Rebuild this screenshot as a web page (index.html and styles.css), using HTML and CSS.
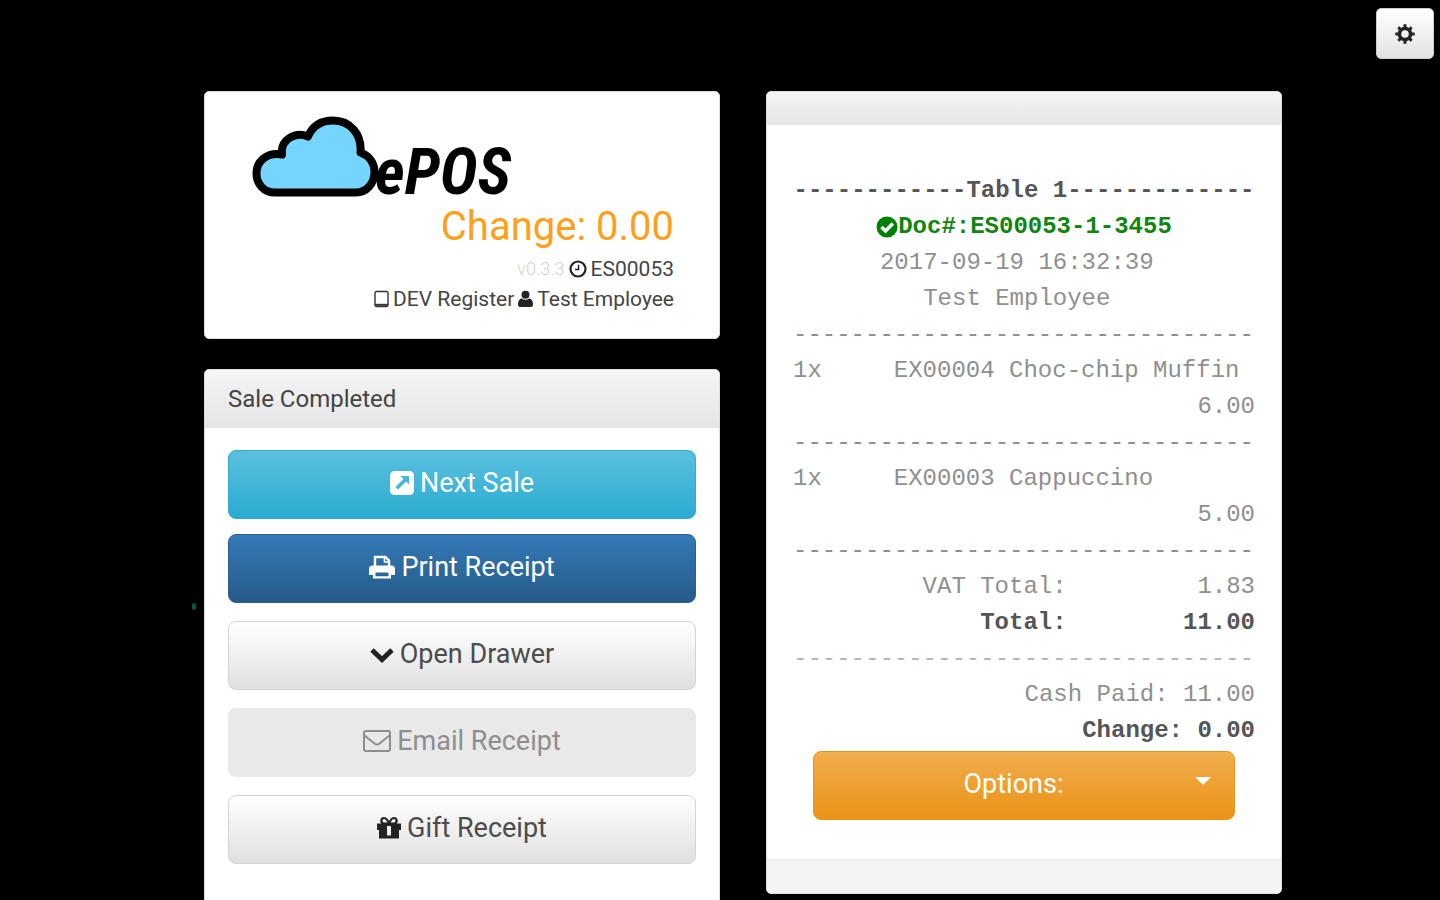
FILE: index.html
```html
<!DOCTYPE html>
<html lang="en">
<head>
<meta charset="utf-8">
<title>ePOS - Sale Completed</title>
<link rel="stylesheet" href="styles.css">
</head>
<body>
<button class="settings" type="button" aria-label="Settings">
  <svg class="icon-cog" viewBox="0 0 20 20" aria-hidden="true"><circle cx="10" cy="10" r="5.3" fill="none" stroke="#222" stroke-width="4"/><path d="M10 .3v19.4M.3 10h19.4M3.3 3.3l13.4 13.4M16.7 3.3L3.300 16.700" stroke="#222" stroke-width="3"/><circle cx="10" cy="10" r="3.8" fill="#f2f2f2"/></svg>
</button>
<main class="page">
  <div class="column">
    <section class="panel summary">
      <svg class="logo" viewBox="0 0 262 84" role="img" aria-label="ePOS">
        <path d="M23 76.500C12 76.500 4.500 68 4.500 57.500C4.500 45 15 36 30 38.500C28 24 43 15 56 20.500C61 9 70 4.500 81 4.500C98 4.500 110 18 108.500 36.500C118 40 122.500 48 122.500 56C122.500 68 114 76.500 104 76.500Z" transform="translate(2 0)" fill="#76d5fe" stroke="#000" stroke-width="8" stroke-linejoin="round"/>
        <text class="logo-text" x="125" y="78">ePOS</text>
      </svg>
      <h1 class="change">Change: 0.00</h1>
      <p class="meta"><span class="version">v0.3.3</span>
        <svg class="icon-sm" viewBox="0 0 18 18" aria-hidden="true"><circle cx="9" cy="9" r="7.500" fill="none" stroke="#222" stroke-width="2.200"/><path d="M9.500 4.800v4.700H6" fill="none" stroke="#222" stroke-width="1.500"/></svg>
        <span>ES00053</span></p>
      <p class="meta"><svg class="icon-tablet" viewBox="0 0 15 18" aria-hidden="true"><rect x="1" y="1.500" width="13" height="15" rx="1.500" fill="none" stroke="#333" stroke-width="1.400"/><path d="M1 14.800h13" stroke="#333" stroke-width="2"/></svg>
        <span>DEV Register</span>
        <svg class="icon-user" viewBox="0 0 15 18" aria-hidden="true"><circle cx="7.500" cy="4.800" r="4" fill="#222"/><path d="M3.500 8.200Q7.500 11.300 11.500 8.200Q15 9.500 15 14.500Q15 17 12.500 17H2.500Q0 17 0 14.500Q0 9.500 3.500 8.200Z" fill="#222"/></svg>
        <span>Test Employee</span></p>
    </section>
    <section class="panel sale">
      <h2 class="panel-head">Sale Completed</h2>
      <div class="actions">
        <div class="main-actions">
          <button class="btn info" type="button"><svg class="icon" viewBox="0 0 24 24" aria-hidden="true"><path fill-rule="evenodd" fill="#fff" d="M4.500 0h15A4.500 4.500 0 0 1 24 4.500v15a4.500 4.500 0 0 1-4.500 4.500h-15A4.500 4.500 0 0 1 0 19.500v-15A4.500 4.500 0 0 1 4.500 0ZM10.500 5L13.500 8L5.500 16L8 18.500L16 10.500L19 13.500V5Z"/></svg>Next Sale</button>
          <button class="btn primary" type="button"><svg class="icon wide" viewBox="0 0 26 24" aria-hidden="true"><path d="M6 12V2h10.500L20 5.500V12" fill="none" stroke="#fff" stroke-width="2.400"/><path d="M15.500 2v5H20" fill="none" stroke="#fff" stroke-width="1.600"/><path fill="#fff" fill-rule="evenodd" d="M3.500 10.500h19Q26 10.500 26 14v6h-4v3.500H4V20H0v-6Q0 10.500 3.500 10.500ZM6.500 17.500v3.700h13v-3.700Z"/></svg>Print Receipt</button>
        </div>
        <button class="btn plain" type="button"><svg class="icon" viewBox="0 0 24 24" aria-hidden="true"><path d="M2 8l10 9.500L22 8" fill="none" stroke="#222" stroke-width="5"/></svg>Open Drawer</button>
        <button class="btn plain" type="button" disabled><svg class="icon mail" viewBox="0 0 28 24" aria-hidden="true"><rect x="1" y="2" width="26" height="20" rx="2" fill="none" stroke="#8e8e8e" stroke-width="2"/><path d="M1.500 6.500L11.500 14.500Q14 16.500 16.500 14.500L26.500 6.500" fill="none" stroke="#8e8e8e" stroke-width="2"/></svg>Email Receipt</button>
        <button class="btn plain" type="button"><svg class="icon" viewBox="0 0 24 24" aria-hidden="true"><path d="M12 7.500C10 2.500 8.500 2 7 2C3.500 2 3.500 7.500 7 7.500ZM12 7.500C14 2.500 15.500 2 17 2C20.500 2 20.500 7.500 17 7.500Z" fill="none" stroke="#222" stroke-width="2.200"/><path fill="#222" fill-rule="evenodd" d="M0 7.500h24v6.500h-2v8.500H2V14H0ZM10 10v9.500h4V10Z"/></svg>Gift Receipt</button>
      </div>
    </section>
  </div>
  <section class="panel receipt">
    <div class="receipt-head"></div>
    <div class="receipt-body">
      <p class="line strong">------------Table 1-------------</p>
      <p class="line doc"><svg class="icon-check" viewBox="0 0 22 22" aria-hidden="true"><circle cx="11" cy="11" r="10.500" fill="#008000"/><path d="M5.500 11l4 4 7.300-7.500" fill="none" stroke="#fff" stroke-width="3.400"/></svg>Doc#:ES00053-1-3455</p>
      <p class="line">2017-09-19 16:32:39&nbsp;</p>
      <p class="line">Test Employee&nbsp;</p>
      <table class="items">
        <colgroup><col class="col-qty"><col class="col-label"><col></colgroup>
        <tbody>
          <tr><td colspan="3">--------------------------------</td></tr>
          <tr><td>1x</td><td colspan="2">EX00004 Choc-chip Muffin</td></tr>
          <tr><td colspan="3" class="num">6.00</td></tr>
          <tr><td colspan="3">--------------------------------</td></tr>
          <tr><td>1x</td><td colspan="2">EX00003 Cappuccino</td></tr>
          <tr><td colspan="3" class="num">5.00</td></tr>
          <tr><td colspan="3">--------------------------------</td></tr>
          <tr><td colspan="2" class="num">VAT Total:</td><td class="num">1.83</td></tr>
          <tr class="strong"><td colspan="2" class="num">Total:</td><td class="num">11.00</td></tr>
          <tr class="faint"><td colspan="3">--------------------------------</td></tr>
          <tr><td colspan="3" class="num">Cash Paid: 11.00</td></tr>
          <tr class="strong"><td colspan="3" class="num">Change: 0.00</td></tr>
        </tbody>
      </table>
      <button class="btn warning" type="button"><span class="options-label">Options:</span><span class="caret"></span></button>
    </div>
    <div class="receipt-foot"></div>
  </section>
</main>
<span class="mark"></span>
</body>
</html>
```
FILE: styles.css
```css
* { box-sizing: border-box; }
body {
  margin: 0;
  background: #000;
  color: #444;
  font-family: Roboto, "Liberation Sans", sans-serif;
}
h1, h2, p { margin: 0; font-weight: 400; }
button { font: inherit; cursor: pointer; }
.page {
  display: grid;
  grid-template-columns: minmax(0, 1fr) minmax(0, 1fr);
  align-items: start;
  gap: 46px;
  height: 100vh;
  padding: 91px 158px 0 204px;
  overflow: auto;
  scrollbar-width: none;
}
.column { display: flex; flex-direction: column; gap: 30px; }
.panel {
  background: #fff;
  border: 1px solid #ddd;
  border-radius: 5px;
  overflow: hidden;
}
.settings {
  position: absolute;
  top: 8px;
  right: 6px;
  display: grid;
  place-items: center;
  width: 58px;
  height: 51px;
  padding: 0;
  border: 1px solid #ccc;
  border-radius: 5px;
  background: linear-gradient(#fff, #e2e2e2);
}
.icon-cog { width: 20px; height: 20px; }
.summary { padding: 24px 45px; text-align: right; }
.logo { display: block; width: 262px; height: 84px; overflow: visible; }
.logo-text {
  font: italic 700 64px "Liberation Sans Narrow", "Roboto Condensed", "Open Sans", sans-serif;
  fill: #000;
}
.change { color: #ff9f1a; font-size: 40px; line-height: 54px; }
.meta {
  display: flex;
  justify-content: flex-end;
  align-items: center;
  gap: 4px;
  font-size: 21px;
  line-height: 30px;
}
.version { color: #d0d0d0; font-weight: 300; font-size: 18px; }
.icon-sm { width: 18px; height: 18px; }
.icon-tablet, .icon-user { width: 15px; height: 18px; }
.sale { min-height: 560px; }
.panel-head {
  height: 58px;
  padding: 0 23px;
  background: linear-gradient(#f5f5f5, #e5e5e5);
  font-size: 24px;
  line-height: 58px;
}
.actions { display: flex; flex-direction: column; gap: 18px; padding: 22px 23px; }
.main-actions { display: flex; flex-direction: column; gap: 15px; }
.btn {
  display: flex;
  justify-content: center;
  align-items: center;
  gap: 6px;
  width: 100%;
  height: 69px;
  padding: 0 0 4px;
  border: 1px solid;
  border-radius: 8px;
  font-size: 27px;
}
.icon { width: 24px; height: 24px; }
.wide { width: 26px; }
.mail { width: 28px; }
.info { color: #fff; border-color: #35abd0; background: linear-gradient(#5bc0de, #2aabd2); }
.primary { color: #fff; border-color: #2a6298; background: linear-gradient(#337ab7, #265a88); }
.plain { color: #4c4c4c; border-color: #d4d4d4; background: linear-gradient(#fff, #e0e0e0); }
.plain:disabled { color: #8e8e8e; border-color: #e8e8e8; background: #e9e9e9; }
.warning {
  width: auto;
  margin: 2px 20px 0;
  align-self: stretch;
  color: #fff;
  border-color: #e8951e;
  background: linear-gradient(#f0ad4e, #eb9316);
}
.options-label { flex: 1; padding-left: 24px; }
.caret {
  margin: 0 23px 6px 0;
  border: 8px solid transparent;
  border-top-color: #fff;
  border-bottom: 0;
}
.receipt-head { height: 33px; background: linear-gradient(#f5f5f5, #e5e5e5); }
.receipt-body {
  display: flex;
  flex-direction: column;
  padding: 48px 26px 39px;
  color: #8f8f8f;
  font: 24px/36px "Liberation Mono", monospace;
}
.receipt-body .btn { font: 27px Roboto, "Liberation Sans", sans-serif; }
.receipt-foot { height: 34px; border-top: 2px solid #eee; background: #f4f4f4; }
.line { text-align: center; white-space: nowrap; }
.strong { color: #555; font-weight: 700; }
.faint { color: #b5b5b5; }
.doc { display: flex; justify-content: center; align-items: center; color: #108510; font-weight: 700; }
.icon-check { width: 22px; height: 22px; }
.items { width: 100%; table-layout: fixed; border-collapse: collapse; white-space: nowrap; }
.items td { height: 36px; padding: 0; }
.col-qty { width: 7ch; }
.col-label { width: 12ch; }
.num { text-align: right; }
.mark {
  position: absolute;
  top: 603px;
  left: 192px;
  width: 4px;
  height: 7px;
  border-radius: 2px;
  background: #065a44;
}
```
